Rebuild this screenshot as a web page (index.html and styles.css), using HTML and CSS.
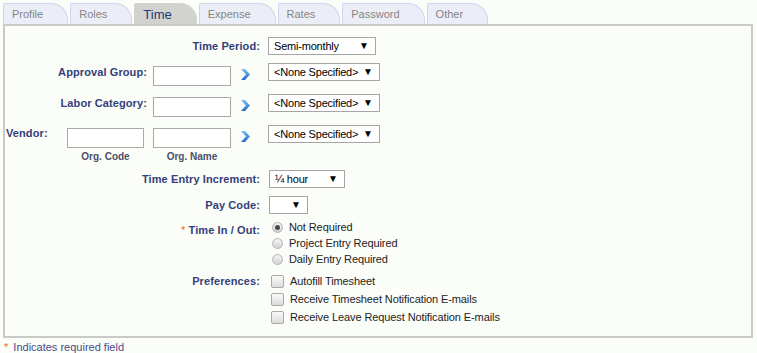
FILE: index.html
```html
<!DOCTYPE html>
<html lang="en">
<head>
    <meta charset="UTF-8">
    <meta name="viewport" content="width=device-width, initial-scale=1.0">
    <title>User Settings - Time</title>
    <link rel="stylesheet" href="styles.css">
</head>
<body>
    <div class="tabs">
        <a class="tab">Profile</a>
        <a class="tab">Roles</a>
        <a class="tab active">Time</a>
        <a class="tab">Expense</a>
        <a class="tab">Rates</a>
        <a class="tab">Password</a>
        <a class="tab">Other</a>
    </div>

    <div class="panel">
        <div class="form">
            <!-- time period -->
            <label class="lbl wide">Time Period:</label>
            <div class="select w108"><select><option>Semi-monthly</option></select></div>

            <!-- approval group -->
            <label class="lbl">Approval Group:</label>
            <input class="box" type="text">
            <span class="go"><svg width="9" height="11" viewBox="0 0 9 11"><defs><linearGradient id="g1" x1="0" y1="0" x2="0" y2="1"><stop offset="0" stop-color="#7cbcf4"/><stop offset="1" stop-color="#1e68c8"/></linearGradient></defs><polygon points="0,0 4,0 9,5.5 4,11 0,11 5,5.5" fill="url(#g1)"/></svg></span>
            <div class="select w112"><select><option>&lt;None Specified&gt;</option></select></div>

            <!-- labor category -->
            <label class="lbl">Labor Category:</label>
            <input class="box" type="text">
            <span class="go"><svg width="9" height="11" viewBox="0 0 9 11"><polygon points="0,0 4,0 9,5.5 4,11 0,11 5,5.5" fill="url(#g1)"/></svg></span>
            <div class="select w112"><select><option>&lt;None Specified&gt;</option></select></div>

            <!-- vendor -->
            <div class="vendor">
                <label class="lbl">Vendor:</label>
                <input class="box" type="text">
            </div>
            <input class="box" type="text">
            <span class="go"><svg width="9" height="11" viewBox="0 0 9 11"><polygon points="0,0 4,0 9,5.5 4,11 0,11 5,5.5" fill="url(#g1)"/></svg></span>
            <div class="select w112"><select><option>&lt;None Specified&gt;</option></select></div>

            <div class="sub code">Org. Code</div>
            <div class="sub name">Org. Name</div>

            <!-- increment -->
            <label class="lbl wide">Time Entry Increment:</label>
            <div class="select w76"><select><option>¼ hour</option></select></div>

            <!-- pay code -->
            <label class="lbl wide">Pay Code:</label>
            <div class="select w39"><select><option></option></select></div>

            <!-- time in / out -->
            <label class="lbl wide low"><span class="req">*</span> Time In / Out:</label>
            <div class="options">
                <label class="radio"><input type="radio" name="tio" checked>Not Required</label>
                <label class="radio"><input type="radio" name="tio">Project Entry Required</label>
                <label class="radio"><input type="radio" name="tio">Daily Entry Required</label>
            </div>

            <!-- preferences -->
            <label class="lbl wide">Preferences:</label>
            <div class="options">
                <label class="check"><input type="checkbox">Autofill Timesheet</label>
                <label class="check"><input type="checkbox">Receive Timesheet Notification E-mails</label>
                <label class="check"><input type="checkbox">Receive Leave Request Notification E-mails</label>
            </div>
        </div>
    </div>

    <div class="footnote"><span class="req">*</span> Indicates required field</div>
</body>
</html>
```

FILE: styles.css
```css
* {
    margin: 0;
    padding: 0;
    box-sizing: border-box;
    font-family: 'Liberation Sans', Arial, sans-serif;
}

body {
    background-color: #fbfdf9;
    font-size: 11px;
    color: #222;
}

.tabs {
    display: flex;
    gap: 2px;
    margin: 3px 0 0 3px;
    height: 21px;
}

.tab {
    display: block;
    height: 21px;
    line-height: 21px;
    padding: 0 24px 0 8px;
    background: #eceef7;
    border: 1px solid #cdd6ef;
    border-bottom: none;
    border-radius: 2px 17px 0 0;
    color: #858585;
    font-size: 11px;
}

.tab.active {
    background: #d2d3ce;
    border-color: #d2d3ce;
    color: #233a78;
    font-size: 13px;
}

.panel {
    margin: 0 4px 0 3px;
    border: 2px solid #c9cac5;
    background: #fbfdf9;
    padding: 11px 0 10px 1px;
}

.form {
    display: grid;
    grid-template-columns: 141px 84px 37px 1fr;
    grid-template-rows: 26px 31px 31px 26px 19px 26px 23px 53px 54px;
    align-items: start;
}

.lbl {
    display: block;
    margin-top: 2px;
    line-height: 14px;
    font-weight: bold;
    color: #34407a;
    text-align: right;
    white-space: nowrap;
    letter-spacing: 0.1px;
}

.lbl.wide {
    grid-column: 1 / 4;
    padding-right: 8px;
}

.lbl.low {
    margin-top: 4px;
}

.req {
    color: #f26a10;
    font-weight: normal;
}

.box {
    justify-self: end;
    width: 78px;
    height: 20px;
    margin-top: 3px;
    border: 1px solid #a9a9a9;
    background: #fff;
}

.go {
    display: block;
    margin: 6px 0 0 10px;
    height: 11px;
}

.go svg {
    display: block;
}

.vendor {
    display: flex;
    justify-content: space-between;
    align-items: flex-start;
}

.vendor .lbl {
    margin-top: 1px;
}

.vendor .box {
    width: 77px;
    margin-right: 3px;
}

.sub {
    font-size: 10px;
    font-weight: bold;
    color: #4c5068;
    text-align: center;
    line-height: 12px;
    justify-self: end;
}

.sub.code {
    grid-column: 1;
    width: 77px;
    margin-right: 3px;
}

.sub.name {
    grid-column: 2;
    width: 78px;
}

.select {
    position: relative;
    height: 18px;
}

.select select {
    appearance: none;
    -webkit-appearance: none;
    width: 100%;
    height: 18px;
    border: 1px solid #a5a5a5;
    border-radius: 0;
    background: #fff;
    font-size: 11px;
    letter-spacing: -0.2px;
    color: #000;
    padding: 0 0 0 5px;
}

.select::after {
    content: "▼";
    position: absolute;
    right: 7px;
    top: 3px;
    font-size: 10px;
    line-height: 12px;
    color: #000;
    pointer-events: none;
}

.w108 { width: 108px; }
.w112 { width: 112px; }
.w76 { width: 76px; margin-left: 1px; }
.w39 { width: 39px; margin-left: 1px; }

.options {
    display: flex;
    flex-direction: column;
}

.radio, .check {
    display: flex;
    align-items: center;
    color: #222;
    white-space: nowrap;
    letter-spacing: -0.1px;
}

.radio {
    height: 16px;
}

.check {
    height: 18px;
}

.radio input {
    appearance: none;
    -webkit-appearance: none;
    width: 11px;
    height: 11px;
    margin: 1px 6px 0 4px;
    border: 1px solid #b4b4b4;
    border-radius: 50%;
    background: linear-gradient(#f4f4f4, #d2d2d2);
    position: relative;
}

.radio input:checked::after {
    content: "";
    position: absolute;
    left: 2px;
    top: 2px;
    width: 5px;
    height: 5px;
    border-radius: 50%;
    background: #4a4a4a;
}

.check input {
    appearance: none;
    -webkit-appearance: none;
    width: 13px;
    height: 13px;
    margin: 0 6px 0 3px;
    border: 1px solid #a8a8a8;
    border-radius: 2px;
    background: linear-gradient(#fafafa, #dcdcdc);
}

.footnote {
    margin: 2px 0 0 4px;
    line-height: 14px;
    color: #4a4a8c;
}

.footnote .req {
    margin-right: 2px;
}
```
